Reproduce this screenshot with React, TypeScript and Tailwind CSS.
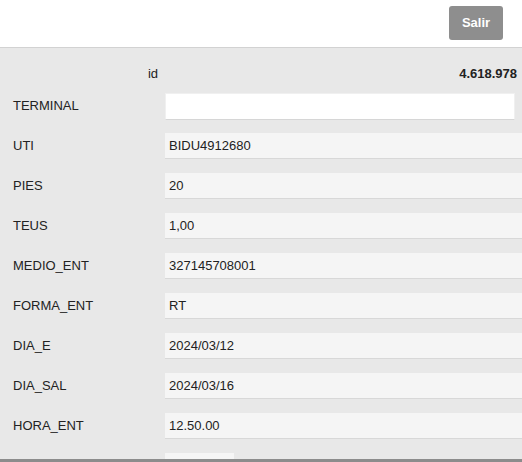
import React from 'react'

const rows = [
  { label: 'UTI', value: 'BIDU4912680' },
  { label: 'PIES', value: '20' },
  { label: 'TEUS', value: '1,00' },
  { label: 'MEDIO_ENT', value: '327145708001' },
  { label: 'FORMA_ENT', value: 'RT' },
  { label: 'DIA_E', value: '2024/03/12' },
  { label: 'DIA_SAL', value: '2024/03/16' },
  { label: 'HORA_ENT', value: '12.50.00' },
]

export default function App() {
  return (
    <div className="h-[462px] w-[522px] flex flex-col overflow-hidden bg-[#e8e8e8] text-[13px] text-[#222] font-['Liberation_Sans',Arial,sans-serif]">
      {/* header */}
      <div className="h-[48px] shrink-0 bg-white border-b border-[#d2d2d2] flex justify-end items-start pt-[6px] pr-[19px]">
        <button className="w-[54px] h-[34px] rounded-[3px] bg-[#8e8e8e] text-white font-bold text-[13px]">
          Salir
        </button>
      </div>

      {/* form */}
      <div className="flex-1 overflow-hidden pt-[14px]">
        <div className="flex items-center h-[24px] pr-[5px]">
          <span className="w-[158px] text-right">id</span>
          <span className="flex-1 text-right font-bold">4.618.978</span>
        </div>

        <div className="flex items-center h-[40px]">
          <span className="w-[165px] pl-[13px] shrink-0">TERMINAL</span>
          <div className="w-[350px] h-[27px] bg-white border border-[#f0f0f0] border-b-[#d6d6d6]"></div>
        </div>

        {rows.map((r) => (
          <div key={r.label} className="flex items-center h-[40px]">
            <span className="w-[165px] pl-[13px] shrink-0">{r.label}</span>
            <div className="flex-1 h-[26px] bg-[#f5f5f5] border-b border-[#d8d8d8] flex items-center pl-[4px]">
              {r.value}
            </div>
          </div>
        ))}

        <div className="flex items-center h-[40px]">
          <span className="w-[165px] pl-[13px] shrink-0"></span>
          <div className="w-[69px] h-[26px] bg-[#f5f5f5] border-b border-[#d8d8d8]"></div>
        </div>
      </div>

      {/* bottom bar */}
      <div className="h-[3px] shrink-0 bg-[#8c8c8c]"></div>
    </div>
  )
}
